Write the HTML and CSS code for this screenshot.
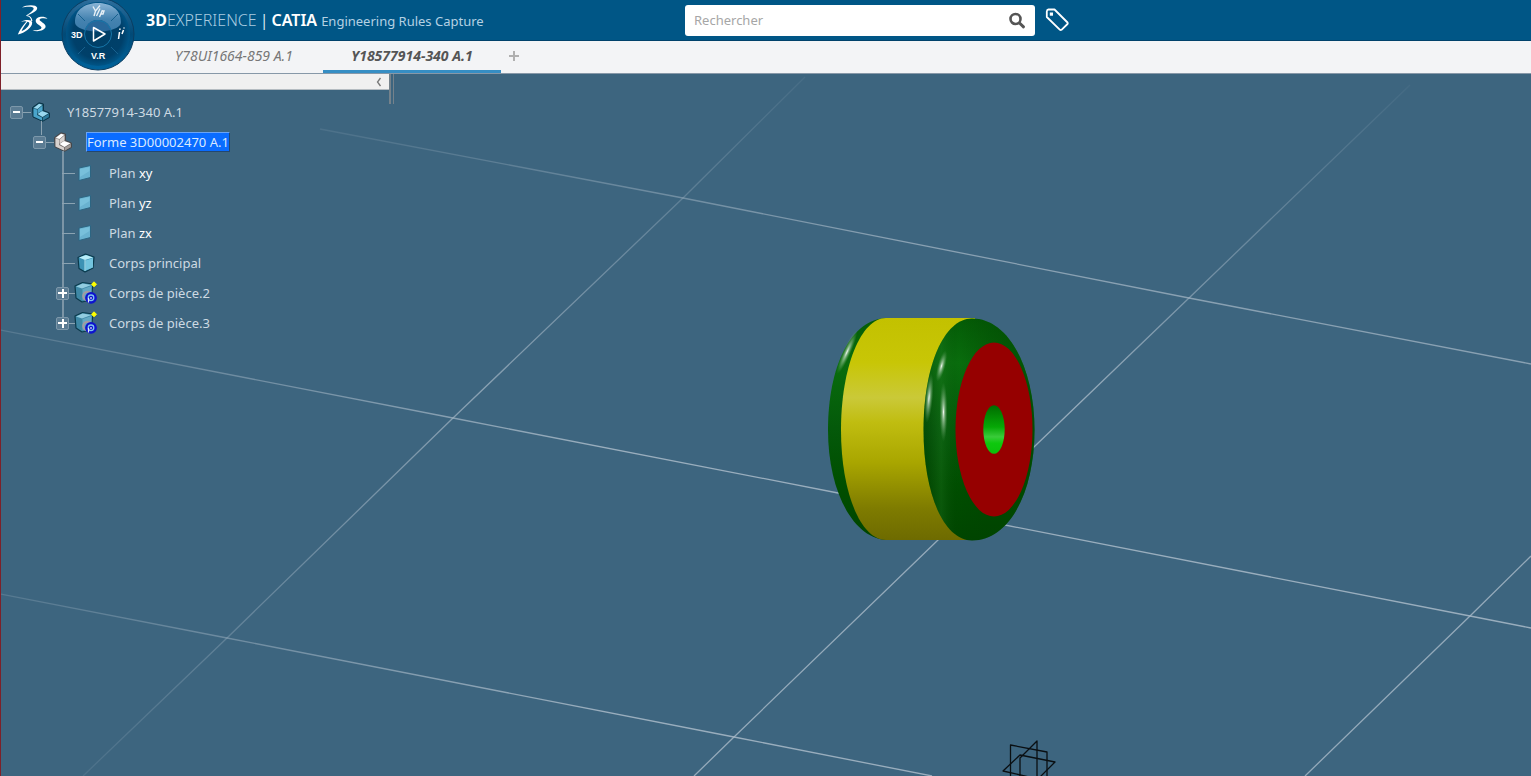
FILE: index.html
```html
<!DOCTYPE html>
<html lang="fr">
<head>
<meta charset="utf-8">
<title>3DEXPERIENCE | CATIA</title>
<link rel="stylesheet" href="styles.css">
</head>
<body>
<div class="app">
  <header class="topbar">
    <div class="brand">
      <svg class="logo" viewBox="0 0 32 32" aria-label="3DS" role="img">
        <path fill="#fff" d="M5 3.500C9 .6 19.500 .2 20.200 3.800C20.600 7 14.500 10.200 9 11.800C13.500 8.500 17 6.200 16.600 4.300C16 2.300 9 2.600 5 3.500Z"/>
        <path fill="#fff" fill-rule="evenodd" d="M4 17.800C8 15.300 15 15.200 15.200 18.500C15.400 23.500 8 29 .8 30.500C2.500 26.500 5.500 22 9.500 17.600C7.500 17 5.800 17.200 4 17.800ZM10.500 17.800C7.800 21 5.500 24.500 4.500 27.300C8.500 25.500 12.500 21.800 12.300 19.200C12.200 18.300 11.500 17.900 10.500 17.800Z"/>
        <path fill="#fff" d="M30.500 14.800C28 14 22.800 14 22.600 15.800C22.500 17.500 29 19.500 28.600 22.800C28 26.800 20 28.300 15.500 26.300C19 26.600 24.300 25.800 24.500 23.800C24.600 21.800 18.500 20.200 18.700 16.800C19 12.600 27 11.500 30.500 14.800Z"/>
        <path d="M9.500 11.500C12.500 12 14.500 13.500 14.800 17" fill="none" stroke="#fff" stroke-width="1.200"/>
      </svg>
      <h1 class="title"><b>3D</b><span class="title-thin">EXPERIENCE</span><span class="title-bar">|</span><span class="title-app">CATIA</span><span class="title-sub">Engineering Rules Capture</span></h1>
    </div>
    <form class="search" role="search">
      <input class="search-input" type="text" placeholder="Rechercher" aria-label="Rechercher">
      <button class="search-button" type="button" aria-label="Lancer la recherche">
        <svg viewBox="0 0 18 18" width="18" height="18"><circle cx="7.500" cy="8" r="5" fill="none" stroke="#555" stroke-width="2.600"/><path d="M11.500 12L15.500 15.800" stroke="#555" stroke-width="3" stroke-linecap="round"/></svg>
      </button>
    </form>
    <button class="tag-button" type="button" aria-label="Tags">
      <svg viewBox="0 0 24 24" width="24" height="24"><path d="M3.500 1.500H9.500L22.500 14.500Q23 15.300 22.500 16L16.500 21.800Q15.700 22.300 15 21.800L1.800 9V3.500Q2 1.700 3.500 1.500Z" fill="none" stroke="#fff" stroke-width="1.800" stroke-linejoin="round"/><rect x="4.800" y="4.500" width="3.200" height="3.200" fill="#fff"/></svg>
    </button>
  </header>

  <nav class="tabs">
    <button class="tab" type="button">Y78UI1664-859 A.1</button>
    <button class="tab tab-active" type="button">Y18577914-340 A.1</button>
    <button class="tab-add" type="button" aria-label="Nouvel onglet"><svg viewBox="0 0 12 12" width="12" height="12"><path d="M6 1V11M1 6H11" stroke="#b0b0b0" stroke-width="2"/></svg></button>
  </nav>

  <button class="compass" type="button" aria-label="Compas">
    <svg viewBox="0 0 74 74" width="74" height="74">
      <defs>
        <radialGradient id="disc" cx=".5" cy=".5" r=".5"><stop offset="0" stop-color="#003f66"/><stop offset=".78" stop-color="#00406a"/><stop offset="1" stop-color="#005587"/></radialGradient>
        <linearGradient id="ring" x1="0" y1="0" x2="0" y2="1"><stop offset="0" stop-color="#2d6f9e"/><stop offset=".5" stop-color="#014a77"/><stop offset="1" stop-color="#00639c"/></linearGradient>
        <linearGradient id="gloss" x1="0" y1="0" x2="0" y2="1"><stop offset="0" stop-color="#8ab4d6"/><stop offset=".6" stop-color="#4583b0"/><stop offset="1" stop-color="#3c7cab"/></linearGradient>
      </defs>
      <circle cx="37" cy="37" r="36" fill="url(#ring)" stroke="#0b3d61"/>
      <circle cx="37" cy="37" r="32" fill="url(#disc)"/>
      <path d="M14 25C14 12 25 6 37 6S60 12 60 25C60 29 56 31 50 33C47 26 42 23 37 23S27 26 24 33C18 31 14 29 14 25Z" fill="url(#gloss)"/>
      <path d="M24 33C26 25 32 23 37 23S48 25 50 33Q37 36 24 33Z" fill="#28679a"/>
      <circle cx="37" cy="37" r="13.500" fill="none" stroke="#1676a9"/>
      <path d="M17 17L24 24M57 17L50 24M17 57L24 50M57 57L50 50" stroke="#17618f"/>
      <path d="M32.500 30.500V44L44 37Z" fill="none" stroke="#fff" stroke-width="1.500" stroke-linejoin="round"/>
      <path d="M32 9.500L34.500 14L39 8.500M34.500 14L33 19M39 11.500L35.500 19M41.500 13L38.500 20M41 14H43L42 17H39.500" fill="none" stroke="#e8f0f6" stroke-width="1.400"/>
      <path d="M58.500 35L57.500 42M59 31.500L58.800 32.800M62.500 33L61 37M63 30.500V31.500" fill="none" stroke="#fff" stroke-width="1.500"/>
      <text class="compass-text" x="10" y="41">3D</text>
      <text class="compass-text" x="30" y="62">V.R</text>
    </svg>
  </button>

  <main class="viewport">
    <svg class="scene" viewBox="1 74 1530 702" preserveAspectRatio="xMidYMid slice" role="img" aria-label="Vue 3D de la pièce">
      <defs>
        <linearGradient id="yellow" x1="0" y1="0" x2="0" y2="1">
          <stop offset="0" stop-color="#c3c100"/><stop offset=".2" stop-color="#c8c606"/><stop offset=".36" stop-color="#cac938"/><stop offset=".47" stop-color="#c0bd10"/><stop offset=".65" stop-color="#a9a600"/><stop offset=".86" stop-color="#7e7b00"/><stop offset="1" stop-color="#6e6b00"/>
        </linearGradient>
        <linearGradient id="green" x1="0" y1="0" x2="0" y2="1">
          <stop offset="0" stop-color="#045c06"/><stop offset=".2" stop-color="#096d0d"/><stop offset=".5" stop-color="#04590a"/><stop offset=".75" stop-color="#004e00"/><stop offset="1" stop-color="#004500"/>
        </linearGradient>
        <linearGradient id="shade" x1="0" y1="0" x2="1" y2="0"><stop offset="0" stop-color="#001c00" stop-opacity=".2"/><stop offset=".16" stop-color="#2b812d" stop-opacity=".25"/><stop offset=".32" stop-color="#003d00" stop-opacity="0"/><stop offset=".85" stop-color="#004600" stop-opacity=".6"/></linearGradient>
        <linearGradient id="hole" x1="0" y1="0" x2="0" y2="1"><stop offset="0" stop-color="#006b00"/><stop offset=".45" stop-color="#06a806"/><stop offset=".65" stop-color="#3acb3a"/><stop offset=".78" stop-color="#0ec80e"/><stop offset="1" stop-color="#0bbf0b"/></linearGradient>
        <radialGradient id="glint"><stop offset="0" stop-color="#f4faf4"/><stop offset=".25" stop-color="#b9d6b9" stop-opacity=".75"/><stop offset="1" stop-color="#5a9b5a" stop-opacity="0"/></radialGradient>
        <linearGradient id="fadeA" gradientUnits="userSpaceOnUse" x1="320" y1="0" x2="900" y2="0"><stop offset="0" stop-color="#9fb3c3" stop-opacity=".15"/><stop offset="1" stop-color="#a9bac8" stop-opacity=".7"/></linearGradient>
        <linearGradient id="fadeB" gradientUnits="userSpaceOnUse" x1="0" y1="0" x2="600" y2="0"><stop offset="0" stop-color="#9fb3c3" stop-opacity=".25"/><stop offset="1" stop-color="#a9bac8" stop-opacity=".85"/></linearGradient>
        <linearGradient id="fadeC" gradientUnits="userSpaceOnUse" x1="0" y1="77" x2="0" y2="400"><stop offset="0" stop-color="#9fb3c3" stop-opacity=".05"/><stop offset="1" stop-color="#a9bac8" stop-opacity=".8"/></linearGradient>
        <linearGradient id="fadeD" gradientUnits="userSpaceOnUse" x1="0" y1="77" x2="0" y2="776"><stop offset="0" stop-color="#9fb3c3" stop-opacity=".1"/><stop offset=".45" stop-color="#a9bac8" stop-opacity=".7"/><stop offset="1" stop-color="#9fb3c3" stop-opacity=".15"/></linearGradient>
      </defs>
      <g fill="none" stroke-width="1.300">
        <path d="M320 129L683 198L1189 298L1531 364" stroke="url(#fadeA)"/>
        <path d="M0 330L453 418L838 493L1005 525L1470 616L1531 628" stroke="url(#fadeB)"/>
        <path d="M0 594L227 638L734 737L932 776" stroke="url(#fadeB)"/>
        <path d="M805 77L683 198L453 418L227 638L83 776" stroke="url(#fadeD)"/>
        <path d="M1410 85L1189 298L1035 446L938 540L734 737L694 776" stroke="url(#fadeC)"/>
        <path d="M1531 556L1470 616L1305 776" stroke="url(#fadeC)"/>
      </g>
      <path d="M888 318C850 318 828 368 828 430S854 540 888 540Z" fill="url(#green)"/>
      <ellipse cx="847" cy="352" rx="4" ry="24" transform="rotate(24 847 352)" fill="url(#glint)"/>
      <path d="M886 318L975 318V540L886 540C861 540 841 493 841 430S861 318 886 318Z" fill="url(#yellow)"/>
      <path d="M972 318.500C1009 318.500 1034.500 369 1034.500 430S1010 540.500 972 540.500C944 540.500 923.500 494 923.500 430S944 318.500 972 318.500Z" fill="url(#green)"/>
      <path d="M972 318.500C1009 318.500 1034.500 369 1034.500 430S1010 540.500 972 540.500C944 540.500 923.500 494 923.500 430S944 318.500 972 318.500Z" fill="url(#shade)"/>
      <ellipse cx="929" cy="398" rx="4" ry="25" transform="rotate(5 929 398)" fill="url(#glint)"/>
      <ellipse cx="941.500" cy="366" rx="4" ry="16" transform="rotate(15 941.500 366)" fill="url(#glint)"/>
      <ellipse cx="943.500" cy="412" rx="4" ry="30" fill="url(#glint)"/>
      <ellipse cx="994" cy="429.500" rx="38.500" ry="87" fill="#960000"/>
      <ellipse cx="994" cy="429.500" rx="10.700" ry="24.300" fill="url(#hole)"/>
      <g fill="none" stroke="#0a0f12" stroke-width="1.300" stroke-linejoin="round">
        <path d="M1010.500 790V745L1047 752V797"/>
        <path d="M1037 790V741L1020 758V804"/>
        <path d="M1020 755L1055 762L1038 779L1003 771Z"/>
      </g>
    </svg>

    <aside class="panel">
      <div class="panel-bar"><button class="collapse" type="button" aria-label="Réduire"><svg viewBox="0 0 6 10" width="6" height="10"><path d="M4.500 1L1.500 5L4.500 9" fill="none" stroke="#777" stroke-width="1.300"/></svg></button></div>
      <span class="panel-grip"></span>
      <svg class="symbols" aria-hidden="true">
        <symbol id="bracket" viewBox="0 0 20 20">
          <path d="M1.500 5.500L8 .8L12.500 2V8.500L18.500 11V15.500L11.500 19.300L2 15Z" fill="var(--dark)" stroke="var(--edge)" stroke-linejoin="round"/>
          <path d="M2.500 6L8 1.800L11.500 2.800L6.500 7Z" fill="var(--lite)"/>
          <path d="M2.500 6.500L6 7.500V13L11 15.500V18.500L2.500 14.500Z" fill="var(--mid)"/>
          <path d="M6.500 12L11 9L17.500 11.300L11.500 15Z" fill="var(--lite)"/>
          <path d="M6.500 7.500L11.500 3.500V8.500L6.500 11.500Z" fill="var(--mid)"/>
          <path d="M12 15.500L17.800 12V15L12 18.500Z" fill="var(--side)"/>
        </symbol>
        <symbol id="plane" viewBox="0 0 20 20">
          <path d="M3 5L14.500 2.500V14.500L3 17.500Z" fill="#69b2d0" stroke="#2c6582"/><path d="M4 6L13.500 4V8L4 14Z" fill="#87cde6" opacity=".5"/>
        </symbol>
        <symbol id="cube" viewBox="0 0 20 20">
          <path d="M2 4.500L9.500 1L18 4L17 15L9 19L3 15.500Z" fill="#3d92b4" stroke="#0a394b" stroke-width="1.200" stroke-linejoin="round"/>
          <path d="M3 4.500L10 2L17 4.500L9 7Z" fill="#b9edf8"/><path d="M9.500 7.500L17 5V14.500L9.500 17.500Z" fill="#73c4de"/><path d="M9 7V18" stroke="#b3e4f0"/>
        </symbol>
        <symbol id="body" viewBox="0 0 24 24">
          <path d="M1 5L8.500 1.500L19 3L17 19L8 21L2 17Z" fill="#3e88a5" stroke="#0b3a4c" stroke-width="1.200" stroke-linejoin="round"/>
          <path d="M2 5.500L8.500 2.500L17.500 4L8 7.500Z" fill="#92cce0"/><path d="M8.500 8L17.500 5V16L8.500 19Z" fill="#64a9c3"/>
          <path d="M20 .8L22.500 3.300L20 5.800L17.500 3.300Z" fill="#ffff00" stroke="#ffff00"/>
          <circle cx="13.500" cy="15" r="4.300" fill="none" stroke="#a69ba0" stroke-width="2"/>
          <circle cx="17" cy="16.800" r="5.900" fill="#0d12cf"/>
          <circle cx="17" cy="16.800" r="2.800" fill="none" stroke="#7ec3ee" stroke-width="1.300"/><path d="M14.500 17V21.500M17 16V18" stroke="#e6e8f8" stroke-width="1.200"/>
        </symbol>
      </svg>
      <ul class="tree">
        <li class="node">
          <div class="row row-root"><button class="toggle" type="button" aria-label="Réduire Y18577914-340 A.1"></button><svg class="icon icon-blue"><use href="#bracket"/></svg><span class="label">Y18577914-340 A.1</span></div>
          <ul class="children">
            <li class="node">
              <div class="row"><button class="toggle" type="button" aria-label="Réduire Forme"></button><svg class="icon icon-white"><use href="#bracket"/></svg><span class="label label-selected">Forme 3D00002470 A.1</span></div>
              <ul class="children children-lined">
                <li class="row leaf"><svg class="icon"><use href="#plane"/></svg><span class="label">Plan <span class="axis">xy</span></span></li>
                <li class="row leaf"><svg class="icon"><use href="#plane"/></svg><span class="label">Plan <span class="axis">yz</span></span></li>
                <li class="row leaf"><svg class="icon"><use href="#plane"/></svg><span class="label">Plan <span class="axis">zx</span></span></li>
                <li class="row leaf"><svg class="icon"><use href="#cube"/></svg><span class="label">Corps principal</span></li>
                <li class="row"><button class="toggle toggle-closed" type="button" aria-label="Développer Corps de pièce.2"></button><svg class="icon icon-body"><use href="#body"/></svg><span class="label">Corps de pièce.2</span></li>
                <li class="row"><button class="toggle toggle-closed" type="button" aria-label="Développer Corps de pièce.3"></button><svg class="icon icon-body"><use href="#body"/></svg><span class="label">Corps de pièce.3</span></li>
              </ul>
            </li>
          </ul>
        </li>
      </ul>
    </aside>
  </main>
</div>
</body>
</html>
```

FILE: styles.css
```css
* { box-sizing: border-box; }

body {
  margin: 0;
  font-family: "Noto Sans", "Open Sans", sans-serif;
  background: #3d657f;
}

button {
  padding: 0;
  border: 0;
  background: none;
  font: inherit;
  color: inherit;
}

svg { display: block; }

.app {
  position: relative;
  display: flex;
  flex-direction: column;
  min-height: 100vh;
  border-left: 1px solid #7d2029;
}

.topbar {
  display: flex;
  align-items: center;
  height: 41px;
  background: #005686;
  border-bottom: 1px solid #00426b;
}

.brand {
  display: flex;
  flex: 0 0 684px;
  align-items: center;
  gap: 97px;
  padding-left: 16px;
}

.logo { width: 32px; height: 32px; }

.title {
  display: flex;
  align-items: baseline;
  margin: 0;
  font-size: 16px;
  font-weight: 400;
  line-height: 20px;
  color: #fff;
  white-space: nowrap;
}

.title-thin { color: #a9cbe0; font-weight: 300; }
.title-bar { margin: 0 3px; color: #d5e5ef; }
.title-app { font-weight: 600; }
.title-sub { margin-left: 4px; font-size: 13px; color: #b4d1e3; }

.search {
  display: flex;
  flex: 0 1 350px;
  height: 31px;
  align-items: center;
  padding-right: 9px;
  background: #fff;
  border-radius: 3px;
}

.search-input {
  flex: 1;
  min-width: 0;
  padding: 0 9px;
  border: 0;
  outline: 0;
  background: none;
  font: 13px/20px "Noto Sans", sans-serif;
  color: #444;
}

.search-input::placeholder { color: #a6a6a6; opacity: 1; }

.tag-button { margin-left: 10px; }

.tabs {
  display: flex;
  height: 33px;
  padding-left: 144px;
  background: #f3f4f6;
  border-bottom: 1px solid #8798a8;
}

.tab {
  width: 178px;
  border-bottom: 3px solid transparent;
  font-size: 14px;
  line-height: 26px;
  font-style: italic;
  color: #777;
}

.tab-active {
  border-color: #368ec4;
  font-weight: 700;
  color: #555;
}

.tab-add { padding: 0 7px 3px; }

.compass {
  position: absolute;
  left: 60px;
  top: -3px;
  z-index: 2;
}

.compass-text {
  font: 700 9px "Liberation Sans", sans-serif;
  fill: #fff;
}

.viewport {
  position: relative;
  flex: 1;
  overflow: hidden;
}

.scene {
  position: absolute;
  inset: 0;
  width: 100%;
  height: 100%;
}

.panel { position: relative; width: 388px; }

.panel-bar {
  display: flex;
  justify-content: flex-end;
  align-items: center;
  height: 16px;
  padding-right: 7px;
  background: #f0f0f0;
  border-bottom: 1px solid #b5bcc1;
}

.panel-grip {
  position: absolute;
  left: 100%;
  top: 0;
  width: 5px;
  height: 30px;
  border-left: 2px solid #75828b;
  border-right: 1px solid #75828b;
}

.symbols { position: absolute; width: 0; height: 0; }

.tree, .children {
  margin: 0;
  padding: 0;
  list-style: none;
}

.tree { padding: 7px 0 0 9px; }

.children { position: relative; padding-left: 23px; }

.children::before {
  content: "";
  position: absolute;
  left: 31px;
  top: -6px;
  height: 14px;
  border-left: 1px solid #8ba3b2;
}

.children-lined { padding-top: 1px; }

.children-lined::before {
  left: 29px;
  height: auto;
  bottom: 15px;
  border-left-width: 2px;
  border-color: #7c95a6;
}

.row {
  position: relative;
  display: flex;
  align-items: center;
  height: 30px;
  font-size: 13px;
  line-height: 18px;
  color: #cddae3;
}

.row::before {
  content: "";
  position: absolute;
  left: 13px;
  width: 8px;
  border-top: 1px solid #8ba3b2;
}

.leaf { padding-left: 13px; }
.leaf::before { left: 6px; width: 13px; }

.toggle {
  position: relative;
  width: 13px;
  height: 13px;
  background: linear-gradient(#fff, #fff) center / 7px 2px no-repeat #5b7c93;
  border: 1px solid #7d98aa;
  border-radius: 2px;
}

.toggle-closed {
  background:
    linear-gradient(#fff, #fff) center / 9px 2px no-repeat,
    linear-gradient(#fff, #fff) center / 2px 9px no-repeat #5b7c93;
}

.icon {
  position: relative;
  width: 20px;
  height: 20px;
  margin: 0 13px 0 7px;
}

.icon-body { width: 24px; height: 24px; margin: 0 11px 0 5px; }

.row-root .icon { margin-right: 16px; margin-left: 8px; }

.icon-blue { --dark: #13495f; --edge: #0c3548; --lite: #9ad9f0; --mid: #4aa5cb; --side: #2f7c9d; }
.icon-white { --dark: #76706e; --edge: #45474b; --lite: #ffffff; --mid: #d8d2cf; --side: #a39c98; }

.axis { color: #fff; }

.label-selected {
  background: #0a6cff;
  border: 1px solid #6ba4f5;
  border-right-color: #24476e;
  border-bottom-color: #24476e;
  color: #d9e9ff;
}
```
